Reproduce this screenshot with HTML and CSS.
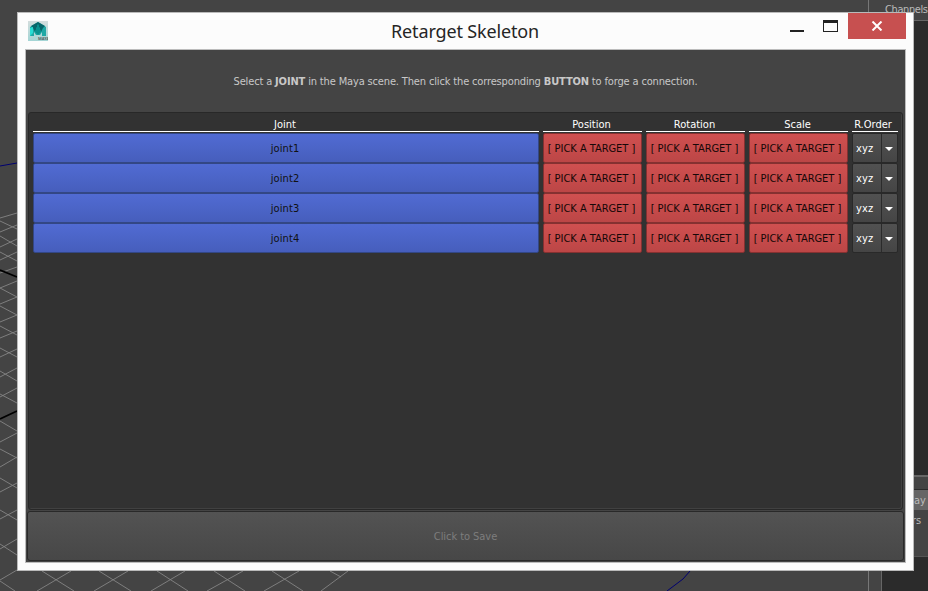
FILE: index.html
```
<!DOCTYPE html>
<html lang="en"><head><meta charset="utf-8"><title>Retarget Skeleton</title><link rel="stylesheet" href="styles.css"></head>
<body>
<svg class="scene" viewBox="0 0 928 591" aria-hidden="true">
<g class="grid">
<path d="M0 218L17 213M0 232L17 225M0 247L17 239M0 260L17 252M0 273L17 267M0 288L17 281M0 304L17 297M0 322L17 315M0 338L17 331M0 357L17 349M0 377L17 368M0 397L17 388M0 442L17 433M0 467L17 457M0 492L17 483M0 519L17 510M0 549L17 539"/>
<path d="M0 221L17 229M0 236L17 246M0 252L17 261M0 288L17 297M0 306L17 315M0 326L17 335M0 348L17 357M0 371L17 381M0 394L17 403M0 421L17 431M0 449L17 458M0 478L17 488M0 510L17 520M0 544L17 555"/>
<path d="M0 580L17 570M37 591L71 571M94 591L128 571M151 591L185 571M207 591L243 571M264 591L299 571M321 591L348 571M0 581L15 591M42 571L74 591M99 571L131 591M157 571L188 591M214 571L245 591M272 571L303 591M330 571L341 577"/>
</g>
<path class="axis" d="M0 270L17 277M0 419L17 411"/>
<path class="curve" d="M0 166L17 163M667 591L683 579L690 571"/>
</svg>
<aside class="dock"><div class="tab">Channels</div><div class="channel"></div><div class="layers"><div class="layer-gap"></div><div class="display">ay</div><div class="menu">rs</div></div></aside>
<main class="window">
<header class="titlebar">
<svg class="logo" width="20" height="20" viewBox="0 0 20 20"><defs><linearGradient id="lg" x2="0" y2="1"><stop stop-color="#d4dddd"/><stop offset="1" stop-color="#a4d5d5"/></linearGradient></defs><path fill="url(#lg)" d="M0 0H20V20H0Z"/><path fill="#20a8a5" d="M2 6L10 1L18 6V15H14V11L12 14H8L6 11V15H2Z"/><path fill="#07666a" d="M3 5L10 1L17 5L15 7L13 11L10 3L7 11L5 7Z"/><path fill="#27ded4" d="M2 7L5 6V12L2 15Z"/><path fill="#08918f" d="M10 3L13 11L10 14L7 11Z"/><text x="10" y="19" class="logo-text">MAYA</text></svg>
<h1>Retarget Skeleton</h1>
<div class="controls"><span class="min"></span><span class="max"></span><button class="close" aria-label="Close"><svg width="12" height="10" viewBox="0 0 12 10"><path d="M1.5 .5L10.5 9.5M10.5 .5L1.5 9.5"/></svg></button></div>
</header>
<section class="client">
<p class="help"><span>Select a <b>JOINT</b> in the Maya scene. Then click the corresponding <b>BUTTON</b> to forge a connection.</span></p>
<div class="panel">
<div class="row head"><span>Joint</span><span>Position</span><span>Rotation</span><span>Scale</span><span>R.Order</span></div>
<div class="row"><button class="joint">joint1</button><button class="pick">[ PICK A TARGET ]</button><button class="pick">[ PICK A TARGET ]</button><button class="pick">[ PICK A TARGET ]</button><button class="order"><span>xyz</span><i></i></button></div>
<div class="row"><button class="joint">joint2</button><button class="pick">[ PICK A TARGET ]</button><button class="pick">[ PICK A TARGET ]</button><button class="pick">[ PICK A TARGET ]</button><button class="order"><span>xyz</span><i></i></button></div>
<div class="row"><button class="joint">joint3</button><button class="pick">[ PICK A TARGET ]</button><button class="pick">[ PICK A TARGET ]</button><button class="pick">[ PICK A TARGET ]</button><button class="order"><span>yxz</span><i></i></button></div>
<div class="row"><button class="joint">joint4</button><button class="pick">[ PICK A TARGET ]</button><button class="pick">[ PICK A TARGET ]</button><button class="pick">[ PICK A TARGET ]</button><button class="order"><span>xyz</span><i></i></button></div>
</div>
<button class="save">Click to Save</button>
</section>
</main>
</body></html>
```
FILE: styles.css
```
* { box-sizing: border-box; }
body { margin: 0; width: 928px; height: 591px; overflow: hidden; position: relative; background: #444; font: 11px/14px "DejaVu Sans Condensed", "DejaVu Sans", sans-serif; font-stretch: condensed; letter-spacing: -.15px; padding: 12px 0 0 17px; }
button { font: inherit; letter-spacing: inherit; padding: 0; margin: 0; border: 0; color: inherit; }
.scene { position: absolute; left: 0; top: 0; width: 928px; height: 591px; }
.grid { fill: none; stroke: #858585; stroke-width: .9; }
.axis { stroke: #000; stroke-width: 1.7; }
.curve { fill: none; stroke: #000070; }
.dock { position: absolute; left: 868px; top: 0; width: 60px; height: 591px; border-left: 1px solid #777; background: #444; color: #bbb; display: flex; flex-direction: column; overflow: hidden; }
.tab { height: 21px; padding: 3px 0 0 16px; border-bottom: 1px solid #666; letter-spacing: -.4px; }
.channel { height: 454px; margin-left: 12px; background: #2b2b2b; }
.layers { flex: 1; margin-left: 12px; border-left: 1px solid #666; background: #2b2b2b; display: flex; flex-direction: column; }
.layer-gap { height: 15px; border-top: 2px solid #666; border-bottom: 1px solid #2b2b2b; background: #444; }
.display { height: 20px; background: #666; padding: 4px 0 0 32px; }
.menu { height: 47px; background: #444; padding: 4px 0 0 30px; border-bottom: 1px solid #555; }
.window { position: relative; width: 897px; height: 559px; padding: 0 8px 7px; background: #fcfcfc; border: 1px solid #bababa; display: flex; flex-direction: column; }
.titlebar { height: 36px; display: grid; grid-template-columns: 130px 1fr 130px; position: relative; }
.logo { margin: 8px 0 0 2px; }
.logo-text { font: bold 4px "Noto Sans", sans-serif; letter-spacing: 0; fill: #566; }
h1 { margin: 5px 1px 0 0; font: 18px/26px "Noto Sans", sans-serif; letter-spacing: -.16px; color: #252525; text-align: center; white-space: nowrap; }
.controls { display: flex; align-items: flex-start; justify-content: flex-end; margin-right: -1px; }
.min { width: 14px; height: 2px; background: #222; margin: 17px 19px 0 0; }
.max { width: 15px; height: 12px; border: 1px solid #222; border-top-width: 3px; margin: 7px 10px 0 0; }
.close { width: 58px; height: 26px; background: #c75050; display: grid; place-items: center; }
.close svg { stroke: #fff; stroke-width: 2; margin: -1px 0 0 -1px; }
.client { height: 514px; flex-shrink: 0; border: 1px solid #bcbcbc; background: #444; margin: 0 -1px; display: flex; flex-direction: column; padding: 0 1px 1px; }
.help { height: 62px; margin: 0; padding-top: 2px; display: grid; place-items: center; color: #c8c8c8; white-space: nowrap; }
.panel { height: 398px; margin: 0 1px 1px 1px; background: #323232; border: 1px solid #282828; box-shadow: inset -1px -1px #414141; border-radius: 3px; padding: 5px 5px 0 4px; }
.row { height: 30px; display: grid; grid-template-columns: 506px 99px 99px 99px 46px; gap: 4px; }
.head { height: 15px; color: #fff; text-align: center; letter-spacing: 0; }
.head span { height: 14px; line-height: 13px; border-bottom: 1px solid #fff; white-space: nowrap; padding-right: 2px; }
.head span:last-child { padding-right: 4px; }
.row button { height: 30px; border: 1px solid; border-radius: 2px; padding: 1px 0 0; }
.row .joint { background: linear-gradient(#516bd3, #465ebc); border-color: #334785; color: #111; letter-spacing: .1px; padding-right: 2px; }
.row .pick { background: linear-gradient(#d05050, #bc4646); border-color: #853131; color: #160808; white-space: nowrap; letter-spacing: -.03px; padding-right: 2px; }
.row .order { background: linear-gradient(#515151, #454545); border-color: #292929; color: #fff; display: flex; padding: 0; }
.order span { width: 29px; height: 28px; line-height: 30px; border-right: 1px solid #2b2b2b; text-align: left; padding-left: 3px; letter-spacing: .1px; }
.order i { width: 8px; height: 4px; margin: 13px 0 0 3px; background: #fff; clip-path: polygon(0 0,100% 0,50% 100%); }
.save { height: 50px; flex-shrink: 0; background: linear-gradient(#535353, #474747); border: 1px solid #292929; border-radius: 3px; color: #7d7d7d; padding-top: 1px; letter-spacing: -.05px; }
```
